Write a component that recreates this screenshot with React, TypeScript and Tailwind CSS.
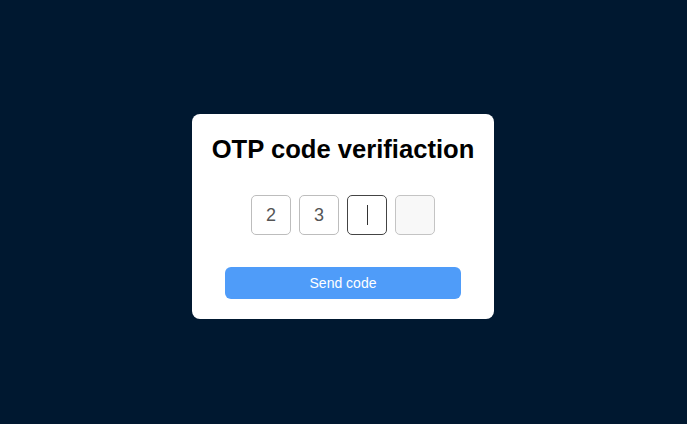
export default function App() {
  const digits = ["2", "3", "", ""];
  return (
    <div
      className="flex h-[424px] w-[687px] items-center justify-center bg-[#001830]"
      style={{ fontFamily: '"Liberation Sans", Arial, sans-serif' }}
    >
      <div className="mr-[1px] mt-[9px] flex w-[302px] flex-col items-center rounded-[8px] bg-white pb-5 pt-5">
        <h1 className="whitespace-nowrap text-center text-[25.6px] font-bold leading-[30px] text-black">
          OTP code verifiaction
        </h1>
        <div className="mt-[31px] flex gap-2">
          {digits.map((d, i) => (
            <div
              key={i}
              className={
                i === 2
                  ? "flex h-10 w-10 items-center justify-center rounded-[5px] border border-[#444] bg-white"
                  : i === 3
                  ? "flex h-10 w-10 items-center justify-center rounded-[5px] border border-[#c4c4c4] bg-[#f8f8f8]"
                  : "flex h-10 w-10 items-center justify-center rounded-[5px] border border-[#bdbdbd] bg-white"
              }
            >
              {i === 2 ? (
                <span className="h-[20px] w-px bg-[#333]" />
              ) : (
                <span className="text-[18px] text-[#555]">{d}</span>
              )}
            </div>
          ))}
        </div>
        <button className="mt-8 h-8 w-[236px] rounded-[6px] bg-[#4f9cf9] text-[14px] text-white">
          Send code
        </button>
      </div>
    </div>
  );
}
